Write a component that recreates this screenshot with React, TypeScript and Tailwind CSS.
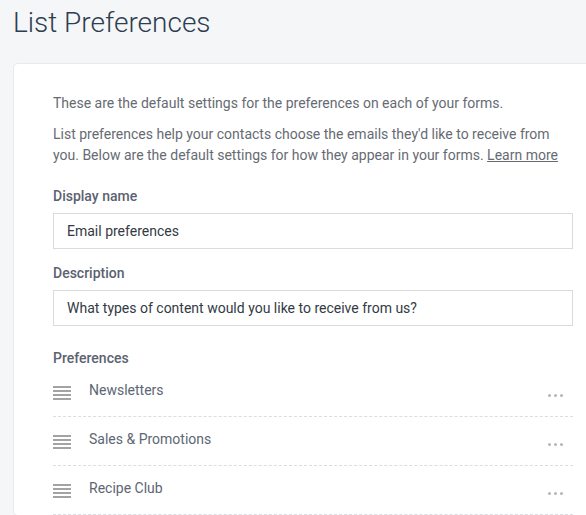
import React from "react";

const preferences = ["Newsletters", "Sales & Promotions", "Recipe Club"];

const DragHandle: React.FC = () => (
  <div className="flex w-[18px] flex-col gap-[2px] pt-[1px]">
    {[0, 1, 2, 3].map((i) => (
      <span key={i} className="block h-[2px] w-full bg-[#a3a3a3]" />
    ))}
  </div>
);

const MoreDots: React.FC = () => (
  <div className="flex gap-[3px] pr-[10px]">
    {[0, 1, 2].map((i) => (
      <span key={i} className="block h-[3px] w-[3px] rounded-full bg-[#b5b5b5]" />
    ))}
  </div>
);

const App: React.FC = () => {
  return (
    <div className="h-[515px] w-[586px] overflow-hidden bg-[#f5f6f8] font-['Roboto',sans-serif]">
      <h1 className="pl-[13px] pt-[4px] text-[28px] font-light leading-[38px] text-[#2e3d4f]">
        List Preferences
      </h1>

      <div className="ml-[13px] mt-[21px] w-[620px] rounded-[5px] border border-[#e8e9ec] bg-white pl-[39px] pt-[29px]">
        <div className="w-[520px]">
          <p className="text-[14px] leading-[21px] text-[#666b73]">
            These are the default settings for the preferences on each of your forms.
          </p>
          <p className="mt-[10px] text-[14px] leading-[21px] text-[#666b73]">
            List preferences help your contacts choose the emails they'd like to receive from
            you. Below are the default settings for how they appear in your forms.{" "}
            <a className="underline" href="#">
              Learn more
            </a>
          </p>

          <label className="mt-[20px] block text-[14px] font-medium leading-[20px] text-[#5b6270]">
            Display name
          </label>
          <div className="mt-[7px] flex h-[36px] items-center border border-[#d9dbdf] px-[13px] text-[14px] text-[#333a44]">
            Email preferences
          </div>

          <label className="mt-[14px] block text-[14px] font-medium leading-[20px] text-[#5b6270]">
            Description
          </label>
          <div className="mt-[7px] flex h-[36px] items-center border border-[#d9dbdf] px-[13px] text-[14px] text-[#333a44]">
            What types of content would you like to receive from us?
          </div>

          <label className="mt-[22px] block text-[14px] font-medium leading-[20px] text-[#5b6270]">
            Preferences
          </label>
          <ul>
            {preferences.map((name) => (
              <li
                key={name}
                className="flex h-[49px] items-start border-b border-dashed border-[#dcdde0]"
              >
                <div className="pt-[17px]">
                  <DragHandle />
                </div>
                <span className="ml-[18px] pt-[12px] text-[14px] leading-[20px] text-[#5d6673]">
                  {name}
                </span>
                <div className="ml-auto pt-[26px]">
                  <MoreDots />
                </div>
              </li>
            ))}
          </ul>
        </div>
      </div>
    </div>
  );
};

export default App;
